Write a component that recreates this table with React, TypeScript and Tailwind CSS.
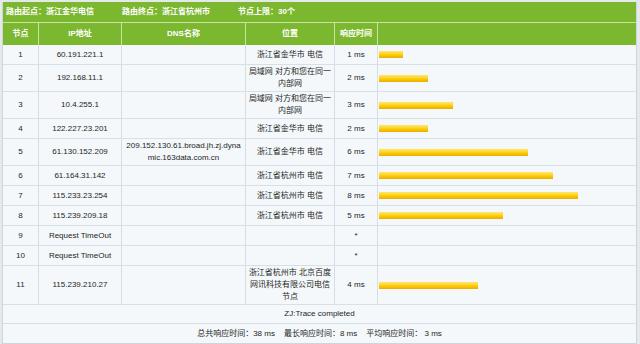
type Hop = {
  n: number;
  ip: string;
  dns?: string;
  loc?: string;
  ms?: number;
};

const hops: Hop[] = [
  { n: 1, ip: "60.191.221.1", loc: "浙江省金华市 电信", ms: 1 },
  { n: 2, ip: "192.168.11.1", loc: "局域网 对方和您在同一内部网", ms: 2 },
  { n: 3, ip: "10.4.255.1", loc: "局域网 对方和您在同一内部网", ms: 3 },
  { n: 4, ip: "122.227.23.201", loc: "浙江省金华市 电信", ms: 2 },
  {
    n: 5,
    ip: "61.130.152.209",
    dns: "209.152.130.61.broad.jh.zj.dynamic.163data.com.cn",
    loc: "浙江省金华市 电信",
    ms: 6,
  },
  { n: 6, ip: "61.164.31.142", loc: "浙江省杭州市 电信", ms: 7 },
  { n: 7, ip: "115.233.23.254", loc: "浙江省杭州市 电信", ms: 8 },
  { n: 8, ip: "115.239.209.18", loc: "浙江省杭州市 电信", ms: 5 },
  { n: 9, ip: "Request TimeOut" },
  { n: 10, ip: "Request TimeOut" },
  { n: 11, ip: "115.239.210.27", loc: "浙江省杭州市 北京百度网讯科技有限公司电信节点", ms: 4 },
];

const cols = "grid grid-cols-[36px_83px_124px_89px_43px_258px]";
const cell =
  "flex items-center justify-center text-center border-r border-[#d5dde5] px-[2px] py-[1px] min-h-[19px] leading-[12px]";
const head =
  "flex items-center justify-center border-r border-[#c9e2a4] h-[22px] font-bold text-white";

export default function App() {
  return (
    <div className="w-[640px] h-[344px] bg-[#e5e9ec] pt-[2px] pl-[2px] font-['Liberation_Sans','Noto_Sans_CJK_SC',sans-serif] text-[8px] text-[#1e1e1e]">
      <div className="w-[635px] border-x border-b border-[#cdd6de] bg-[#f4f8fa]">
        {/* Title */}
        <div className="flex items-center h-[20px] bg-[#7cb82f] pl-[3px] font-bold text-white">
          <span className="w-[116px]">路由起点：浙江金华电信</span>
          <span className="w-[116px]">路由终点：浙江省杭州市</span>
          <span>节点上限：30个</span>
        </div>

        {/* Header */}
        <div className={`${cols} bg-[#7cb82f] border-t border-[#c9e2a4]`}>
          <div className={head}>节点</div>
          <div className={head}>IP地址</div>
          <div className={head}>DNS名称</div>
          <div className={head}>位置</div>
          <div className={head}>响应时间</div>
          <div className="h-[22px]" />
        </div>

        {/* Hops */}
        {hops.map((h) => (
          <div key={h.n} className={`${cols} border-b border-[#d8e0e7]`}>
            <div className={cell}>{h.n}</div>
            <div className={cell}>{h.ip}</div>
            <div className={`${cell} break-all`}>{h.dns}</div>
            <div className={cell}>{h.loc}</div>
            <div className={cell}>{h.ms ? `${h.ms} ms` : "*"}</div>
            <div className="flex items-center pl-[1px]">
              {h.ms && (
                <div
                  className="h-[7px] bg-gradient-to-b from-[#ffe766] via-[#ffcf0a] to-[#e9ad00]"
                  style={{ width: h.ms * 25 - 1 }}
                />
              )}
            </div>
          </div>
        ))}

        {/* Summary */}
        <div className="flex items-center justify-center h-[19px] border-b border-[#d8e0e7]">
          ZJ:Trace completed
        </div>
        <div className="flex items-center justify-center gap-[9px] h-[19px]">
          <span>总共响应时间：38 ms</span>
          <span>最长响应时间：8 ms</span>
          <span>平均响应时间： 3 ms</span>
        </div>
      </div>
    </div>
  );
}
